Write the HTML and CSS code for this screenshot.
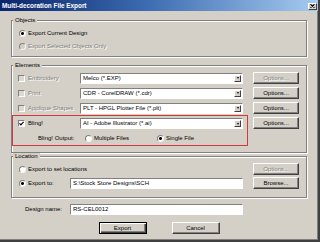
FILE: index.html
```html
<!DOCTYPE html>
<html>
<head>
<meta charset="utf-8">
<link rel="stylesheet" href="styles.css">
</head>
<body>
<div class="window">
  <div class="titlebar">
    <span class="title">Multi-decoration File Export</span>
    <span class="close"><svg width="5" height="4" viewBox="0 0 5 4"><path d="M0.5 0.3 L4.5 3.7 M4.5 0.3 L0.5 3.7" stroke="#000" stroke-width="1.1" fill="none"/></svg></span>
  </div>
  <div class="content">
    <div class="group objects">
      <div class="group-title">Objects</div>
      <div class="opt-row first"><span class="radio on"></span><span class="opt-text">Export Current Design</span></div>
      <div class="opt-row"><span class="radio dis"></span><span class="opt-text disabled">Export Selected Objects Only</span></div>
    </div>

    <div class="group elements">
      <div class="group-title">Elements</div>
      <div class="el-row first">
        <span class="check dis"></span><span class="el-label disabled">Embroidery</span>
        <div class="combo"><span class="combo-text">Melco (*.EXP)</span><span class="combo-btn"><span class="tri"></span></span></div>
        <div class="btn disabled">Options...</div>
      </div>
      <div class="el-row">
        <span class="check dis"></span><span class="el-label disabled">Print</span>
        <div class="combo"><span class="combo-text">CDR - CorelDRAW (*.cdr)</span><span class="combo-btn"><span class="tri"></span></span></div>
        <div class="btn">Options...</div>
      </div>
      <div class="el-row">
        <span class="check dis"></span><span class="el-label disabled">Applique Shapes</span>
        <div class="combo"><span class="combo-text">PLT - HPGL Plotter File (*.plt)</span><span class="combo-btn"><span class="tri"></span></span></div>
        <div class="btn">Options...</div>
      </div>
      <div class="bling">
        <div class="highlight">
          <div class="bling-row">
            <span class="check"><svg width="5" height="5" viewBox="0 0 5 5"><path d="M0.5 2.3 L1.9 3.8 L4.6 0.9" stroke="#000" stroke-width="1.2" fill="none"/></svg></span><span class="el-label">Bling!</span>
            <div class="combo"><span class="combo-text">AI - Adobe Illustrator (*.ai)</span><span class="combo-btn"><span class="tri"></span></span></div>
          </div>
          <div class="output-row">
            <span class="out-label">Bling! Output:</span>
            <span class="out-opt"><span class="radio"></span><span class="opt-text">Multiple Files</span></span>
            <span class="out-opt"><span class="radio on"></span><span class="opt-text">Single File</span></span>
          </div>
        </div>
        <div class="btn bling-btn">Options...</div>
      </div>
    </div>

    <div class="group location">
      <div class="group-title">Location</div>
      <div class="loc-row first">
        <span class="radio"></span><span class="loc-label wide">Export to set locations</span>
        <div class="btn disabled">Options...</div>
      </div>
      <div class="loc-row">
        <span class="radio on"></span><span class="loc-label">Export to:</span>
        <div class="field">S:\Stock Store Designs\SCH</div>
        <div class="btn">Browse...</div>
      </div>
    </div>

    <div class="name-row">
      <span class="name-label">Design name:</span>
      <div class="field">RS-CEL0012</div>
    </div>

    <div class="actions">
      <div class="btn default">Export</div>
      <div class="btn">Cancel</div>
    </div>
  </div>
</div>
</body>
</html>
```

FILE: styles.css
```css
html, body {
  margin: 0;
  padding: 0;
}
body {
  width: 320px;
  height: 242px;
  overflow: hidden;
  font-family: "Liberation Sans", Arial, sans-serif;
  font-size: 6px;
  color: #000;
}
.window {
  width: 320px;
  height: 242px;
  box-sizing: border-box;
  background: #d4d0c8;
  border-right: 2px solid #404040;
  border-bottom: 2px solid #404040;
  box-shadow: inset -1px -1px 0 #808080;
  display: flex;
  flex-direction: column;
}
.titlebar {
  height: 11px;
  flex: none;
  background: linear-gradient(to right, #0a246a 0%, #3a6ab0 45%, #a6caf0 100%);
  display: flex;
  align-items: center;
  justify-content: space-between;
  padding: 0 1px 0 2px;
}
.title {
  color: #fff;
  font-weight: bold;
  font-size: 6.4px;
  line-height: 11px;
  white-space: nowrap;
}
.close {
  width: 9px;
  height: 7px;
  box-sizing: border-box;
  background: #d4d0c8;
  border: 1px solid;
  border-color: #fff #404040 #404040 #fff;
  display: flex;
  align-items: center;
  justify-content: center;
  margin-top: 1px;
}
.close svg { display: block; }
.content {
  flex: 1;
  display: flex;
  flex-direction: column;
  padding: 0 11px 0 11px;
}
.group {
  border: 1px solid #808080;
  box-shadow: inset 1px 1px 0 #fff, 1px 1px 0 #fff;
  display: flex;
  flex-direction: column;
}
.group-title {
  align-self: flex-start;
  margin: -4px 0 0 1px;
  padding: 0 2px;
  line-height: 7px;
  height: 7px;
  background: #d4d0c8;
  white-space: nowrap;
}
.objects {
  margin-top: 9px;
  padding-bottom: 3px;
}
.opt-row {
  height: 13px;
  display: flex;
  align-items: center;
  padding-left: 7px;
}
.opt-row.first { margin-top: 3px; }
.opt-text {
  margin-left: 2px;
  white-space: nowrap;
  line-height: 7px;
}
.disabled {
  color: #808080;
  text-shadow: 1px 1px 0 #fff;
}
.radio {
  flex: none;
  width: 7px;
  height: 7px;
  box-sizing: border-box;
  border-radius: 50%;
  border: 1px solid;
  border-color: #808080 #f4f4f4 #f4f4f4 #808080;
  background: #fff;
}
.radio.on {
  background: radial-gradient(circle, #000 0, #000 1.2px, #fff 1.7px);
}
.radio.dis { background: #d4d0c8; }
.check {
  flex: none;
  width: 7px;
  height: 7px;
  box-sizing: border-box;
  border: 1px solid;
  border-color: #808080 #fff #fff #808080;
  background: #fff;
  display: flex;
  align-items: center;
  justify-content: center;
}
.check.dis { background: #dcd9d2; }
.check svg { display: block; }

.elements {
  margin-top: 8px;
  padding-bottom: 6px;
}
.el-row {
  height: 12px;
  display: flex;
  align-items: center;
  padding-left: 6px;
  margin-top: 3px;
}
.el-row.first { margin-top: 3px; }
.el-label {
  width: 52px;
  margin-left: 3px;
  white-space: nowrap;
  line-height: 7px;
}
.combo {
  width: 163px;
  height: 11px;
  box-sizing: border-box;
  background: #fff;
  border: 1px solid;
  border-color: #808080 #fff #fff #808080;
  display: flex;
  align-items: center;
  justify-content: space-between;
  padding: 0 1px 0 1px;
}
.combo-text {
  white-space: nowrap;
  line-height: 7px;
  padding-left: 1px;
}
.combo-btn {
  width: 7px;
  height: 7px;
  box-sizing: border-box;
  background: #d4d0c8;
  border: 1px solid;
  border-color: #fff #404040 #404040 #fff;
  display: flex;
  align-items: center;
  justify-content: center;
}
.tri {
  width: 0;
  height: 0;
  border-left: 1.5px solid transparent;
  border-right: 1.5px solid transparent;
  border-top: 2px solid #000;
}
.btn {
  flex: none;
  width: 46px;
  height: 12px;
  box-sizing: border-box;
  border: 1px solid;
  border-color: #fff #404040 #404040 #fff;
  box-shadow: inset -1px -1px 0 #808080;
  display: flex;
  align-items: center;
  justify-content: center;
  line-height: 7px;
  white-space: nowrap;
  margin-left: 10px;
}
.bling {
  display: flex;
  align-items: flex-start;
  margin-top: 1px;
}
.highlight {
  width: 236px;
  height: 31px;
  box-sizing: border-box;
  border: 1px solid #d03a3a;
  display: flex;
  flex-direction: column;
  padding-left: 5px;
}
.bling-row {
  height: 15px;
  display: flex;
  align-items: center;
}
.output-row {
  height: 14px;
  display: flex;
  align-items: center;
  padding-left: 20px;
}
.out-label {
  width: 47px;
  white-space: nowrap;
  line-height: 7px;
}
.out-opt {
  width: 72px;
  display: flex;
  align-items: center;
}
.bling-btn {
  margin-top: 2px;
  margin-left: 5px;
}

.location {
  margin-top: 3px;
  padding-bottom: 8px;
}
.loc-row {
  height: 12px;
  display: flex;
  align-items: center;
  padding-left: 7px;
  margin-top: 2px;
}
.loc-row.first { margin-top: 3px; }
.loc-label {
  width: 42px;
  margin-left: 2px;
  white-space: nowrap;
  line-height: 7px;
}
.loc-label.wide { width: 215px; }
.field {
  width: 173px;
  height: 11px;
  box-sizing: border-box;
  background: #fff;
  border: 1px solid;
  border-color: #808080 #fff #fff #808080;
  display: flex;
  align-items: center;
  padding-left: 2px;
  line-height: 7px;
  white-space: nowrap;
}
.name-row {
  height: 11px;
  margin-top: 6px;
  display: flex;
  align-items: center;
}
.name-label {
  width: 45px;
  margin-left: 14px;
  white-space: nowrap;
  line-height: 7px;
}
.actions {
  margin-top: 7px;
  display: flex;
  justify-content: center;
  gap: 25px;
}
.actions .btn {
  width: 48px;
  margin-left: 0;
}
.btn.default {
  border: 1px solid #000;
  box-shadow: inset 1px 1px 0 #fff, inset -1px -1px 0 #404040, inset -2px -2px 0 #808080;
}
```
